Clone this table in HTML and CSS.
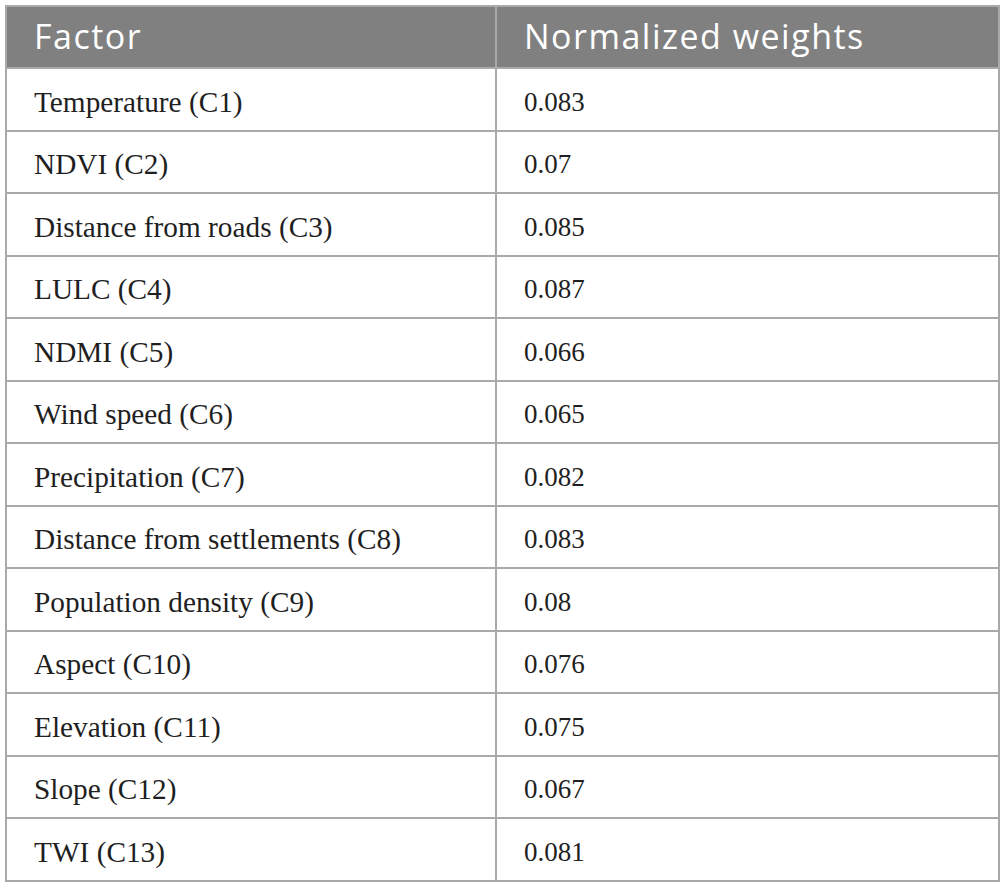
FILE: index.html
```html
<!DOCTYPE html>
<html>
<head>
<meta charset="utf-8">
<link rel="stylesheet" href="styles.css">
</head>
<body>
<table class="weights">
  <thead>
    <tr><th class="col-factor">Factor</th><th class="col-weight">Normalized weights</th></tr>
  </thead>
  <tbody>
    <tr><td class="label">Temperature (C1)</td><td class="num">0.083</td></tr>
    <tr><td class="label">NDVI (C2)</td><td class="num">0.07</td></tr>
    <tr><td class="label">Distance from roads (C3)</td><td class="num">0.085</td></tr>
    <tr><td class="label">LULC (C4)</td><td class="num">0.087</td></tr>
    <tr><td class="label">NDMI (C5)</td><td class="num">0.066</td></tr>
    <tr><td class="label">Wind speed (C6)</td><td class="num">0.065</td></tr>
    <tr><td class="label">Precipitation (C7)</td><td class="num">0.082</td></tr>
    <tr><td class="label">Distance from settlements (C8)</td><td class="num">0.083</td></tr>
    <tr><td class="label">Population density (C9)</td><td class="num">0.08</td></tr>
    <tr><td class="label">Aspect (C10)</td><td class="num">0.076</td></tr>
    <tr><td class="label">Elevation (C11)</td><td class="num">0.075</td></tr>
    <tr><td class="label">Slope (C12)</td><td class="num">0.067</td></tr>
    <tr><td class="label">TWI (C13)</td><td class="num">0.081</td></tr>
  </tbody>
</table>
</body>
</html>
```
FILE: styles.css
```css
html, body {
  margin: 0;
  padding: 0;
  background: #ffffff;
}
body {
  padding: 5px 0 0 5px;
}
.weights {
  border-collapse: collapse;
  width: 995px;
  table-layout: fixed;
  border: 2px solid #a9a9a9;
}
.weights th,
.weights td {
  border: 2px solid #a9a9a9;
  text-align: left;
  vertical-align: middle;
  padding: 0 0 0 27px;
}
.col-factor { width: 461px; }
.weights th {
  background: #808080;
  color: #ffffff;
  font-family: "Open Sans", "Noto Sans", sans-serif;
  font-weight: 400;
  font-size: 34px;
  height: 58px;
  padding-bottom: 2px;
  letter-spacing: 1.5px;
}
.weights td {
  height: 54.5px;
  padding-top: 6px;
  color: #1f1f1f;
  font-family: "Liberation Serif", "Times New Roman", serif;
}
.weights td.label {
  font-size: 29.3px;
}
.weights td.num {
  font-size: 27px;
}
```
